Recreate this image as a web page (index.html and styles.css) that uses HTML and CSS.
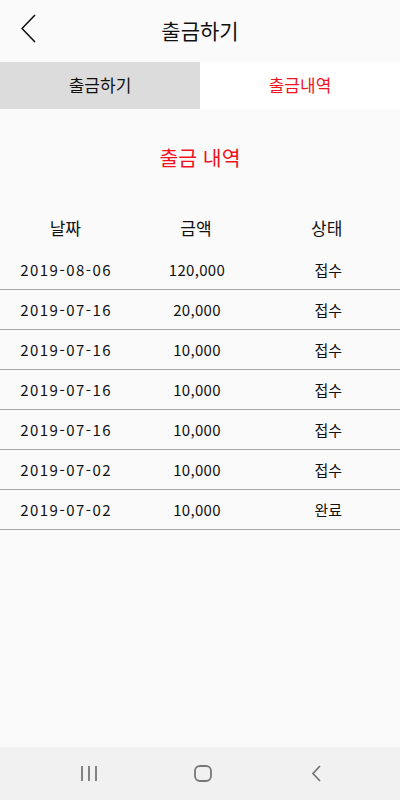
FILE: index.html
```html
<!DOCTYPE html>
<html lang="ko">
<head>
<meta charset="utf-8">
<link rel="stylesheet" href="styles.css">
</head>
<body>
<div class="screen">
  <header class="appbar">
    <svg class="back" width="16" height="30" viewBox="0 0 16 30"><polyline points="14,1 1,14.5 14,28" fill="none" stroke="#111" stroke-width="1.6"/></svg>
    <h1 class="title">출금하기</h1>
  </header>
  <nav class="tabs">
    <div class="tab">출금하기</div>
    <div class="tab active">출금내역</div>
  </nav>
  <main class="content">
    <h2 class="section-title">출금 내역</h2>
    <div class="table">
      <div class="row head"><span>날짜</span><span>금액</span><span>상태</span></div>
      <div class="row"><span class="date">2019-08-06</span><span class="amt">120,000</span><span>접수</span></div>
      <div class="row"><span class="date">2019-07-16</span><span class="amt">20,000</span><span>접수</span></div>
      <div class="row"><span class="date">2019-07-16</span><span class="amt">10,000</span><span>접수</span></div>
      <div class="row"><span class="date">2019-07-16</span><span class="amt">10,000</span><span>접수</span></div>
      <div class="row"><span class="date">2019-07-16</span><span class="amt">10,000</span><span>접수</span></div>
      <div class="row"><span class="date">2019-07-02</span><span class="amt">10,000</span><span>접수</span></div>
      <div class="row"><span class="date">2019-07-02</span><span class="amt">10,000</span><span>완료</span></div>
    </div>
  </main>
  <footer class="navbar">
    <svg width="20" height="20" viewBox="0 0 20 20"><g stroke="#777" stroke-width="1.8"><line x1="3" y1="2" x2="3" y2="17"/><line x1="10" y1="2" x2="10" y2="17"/><line x1="17" y1="2" x2="17" y2="17"/></g></svg>
    <svg width="20" height="20" viewBox="0 0 20 20"><rect x="2" y="2" width="16" height="15" rx="5" fill="none" stroke="#777" stroke-width="1.8"/></svg>
    <svg width="20" height="20" viewBox="0 0 20 20"><polyline points="13,2 6,9.5 13,17" fill="none" stroke="#777" stroke-width="1.8"/></svg>
  </footer>
</div>
</body>
</html>
```
FILE: styles.css
```css
* { box-sizing: border-box; margin: 0; padding: 0; }
html, body { width: 400px; height: 800px; }
body {
  background: #fafafa;
  font-family: "Noto Sans CJK KR", "Noto Sans", sans-serif;
  color: #111;
}
.screen {
  width: 400px;
  height: 800px;
  display: flex;
  flex-direction: column;
}
.appbar {
  height: 62px;
  position: relative;
  display: flex;
  align-items: center;
  justify-content: center;
}
.back {
  position: absolute;
  left: 21px;
  top: 14px;
}
.title {
  font-size: 21px;
  font-weight: 400;
  line-height: 1;
  margin-top: -2px;
}
.tabs {
  display: grid;
  grid-template-columns: 1fr 1fr;
  height: 47px;
}
.tab {
  display: flex;
  align-items: center;
  justify-content: center;
  font-size: 17px;
  background: #fff;
  padding-bottom: 2px;
}
.tab:first-child { background: #dcdcdc; }
.tab.active { color: #f0141e; }
.content {
  flex: 1;
}
.section-title {
  font-size: 20.5px;
  font-weight: 400;
  color: #f0141e;
  text-align: center;
  line-height: 28px;
  margin-top: 34px;
  height: 67px;
}
.row {
  display: grid;
  grid-template-columns: repeat(3, 1fr);
  padding-right: 6px;
  height: 40px;
  align-items: center;
  border-bottom: 1px solid #a8a8a8;
  font-size: 15px;
}
.row span { text-align: center; }
.row .date { letter-spacing: 1.5px; padding-left: 1px; }
.row .amt { letter-spacing: 0.3px; }
.row.head {
  border-bottom: none;
  font-size: 17px;
  padding-bottom: 5px;
  padding-left: 0;
  padding-right: 8px;
}
.navbar {
  height: 53px;
  background: #f1f1f1;
  display: flex;
  align-items: center;
  justify-content: space-between;
  padding: 0 73px 0 79px;
}
```
